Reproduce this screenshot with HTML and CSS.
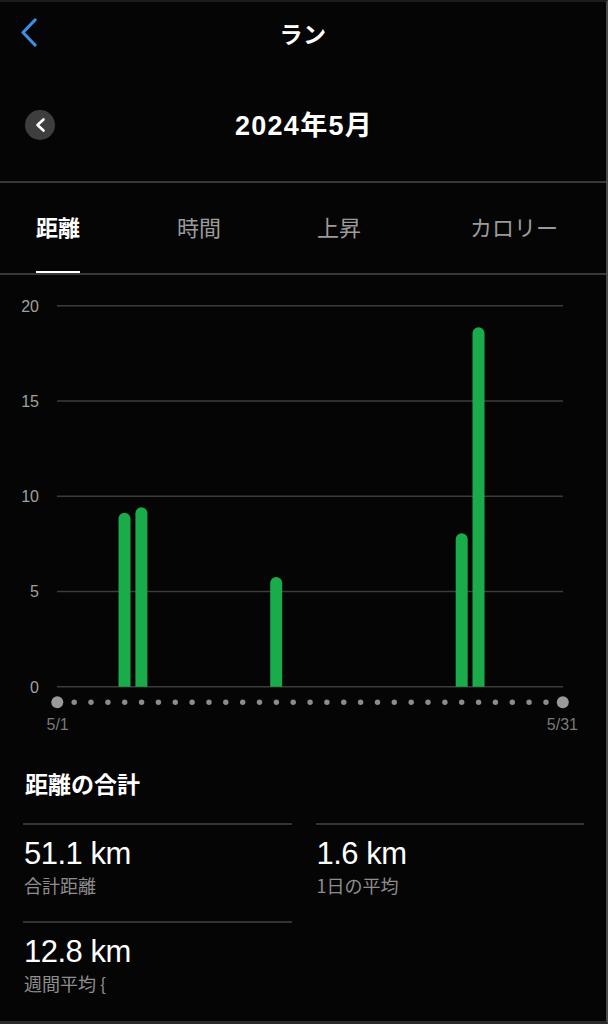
FILE: index.html
```html
<!DOCTYPE html>
<html lang="ja">
<head>
<meta charset="utf-8">
<title>ラン</title>
<link rel="stylesheet" href="styles.css">
</head>
<body>
<div class="app">
  <header class="nav">
    <div class="nav-left">
      <svg class="back" width="20" height="30" viewBox="0 0 20 30"><polyline points="15,2 3,14.5 15,27" fill="none" stroke="#3d8ee6" stroke-width="3.2" stroke-linecap="round" stroke-linejoin="round"/></svg>
    </div>
    <div class="nav-title">ラン</div>
    <div></div>
  </header>

  <section class="month">
    <div class="month-left">
      <span class="circle-btn"><svg width="30" height="30" viewBox="0 0 30 30"><polyline points="18.5,9.5 12.5,15 18.5,20.5" fill="none" stroke="#fff" stroke-width="2.6" stroke-linecap="round" stroke-linejoin="round"/></svg></span>
    </div>
    <div class="month-title">2024年5月</div>
    <div></div>
  </section>

  <nav class="tabs">
    <div class="tab active">距離</div>
    <div class="tab second">時間</div>
    <div class="tab">上昇</div>
    <div class="tab last">カロリー</div>
  </nav>

  <section class="chart">
    <svg width="606" height="475" viewBox="0 0 606 475">
      <g class="grid" stroke="#3c3c3c" stroke-width="1.5">
        <line x1="57" y1="30.7" x2="563" y2="30.7"/>
        <line x1="57" y1="125.9" x2="563" y2="125.9"/>
        <line x1="57" y1="221.2" x2="563" y2="221.2"/>
        <line x1="57" y1="316.5" x2="563" y2="316.5"/>
        <line x1="57" y1="411.7" x2="563" y2="411.7"/>
      </g>
      <g class="ylabels" text-anchor="end">
        <text x="39" y="36.5">20</text>
        <text x="39" y="131.7">15</text>
        <text x="39" y="227">10</text>
        <text x="39" y="322.3">5</text>
        <text x="39" y="417.5">0</text>
      </g>
      <g fill="#1aab4a">
        <path d="M118.5 411.7 V243.7 A6 6 0 0 1 130.5 243.7 V411.7 Z"/>
        <path d="M135.4 411.7 V238.3 A6 6 0 0 1 147.4 238.3 V411.7 Z"/>
        <path d="M270.2 411.7 V308 A6 6 0 0 1 282.2 308 V411.7 Z"/>
        <path d="M455.7 411.7 V264.3 A6 6 0 0 1 467.7 264.3 V411.7 Z"/>
        <path d="M472.5 411.7 V58.3 A6 6 0 0 1 484.5 58.3 V411.7 Z"/>
      </g>
      <g id="dots" fill="#8c8c8c">
        <circle cx="57.3" cy="427.3" r="6" fill="#9a9a9a"/>
        <circle cx="74.2" cy="427.3" r="2.7"/>
        <circle cx="91.0" cy="427.3" r="2.7"/>
        <circle cx="107.9" cy="427.3" r="2.7"/>
        <circle cx="124.7" cy="427.3" r="2.7"/>
        <circle cx="141.6" cy="427.3" r="2.7"/>
        <circle cx="158.4" cy="427.3" r="2.7"/>
        <circle cx="175.3" cy="427.3" r="2.7"/>
        <circle cx="192.1" cy="427.3" r="2.7"/>
        <circle cx="209.0" cy="427.3" r="2.7"/>
        <circle cx="225.8" cy="427.3" r="2.7"/>
        <circle cx="242.7" cy="427.3" r="2.7"/>
        <circle cx="259.5" cy="427.3" r="2.7"/>
        <circle cx="276.4" cy="427.3" r="2.7"/>
        <circle cx="293.2" cy="427.3" r="2.7"/>
        <circle cx="310.1" cy="427.3" r="2.7"/>
        <circle cx="326.9" cy="427.3" r="2.7"/>
        <circle cx="343.8" cy="427.3" r="2.7"/>
        <circle cx="360.6" cy="427.3" r="2.7"/>
        <circle cx="377.5" cy="427.3" r="2.7"/>
        <circle cx="394.3" cy="427.3" r="2.7"/>
        <circle cx="411.2" cy="427.3" r="2.7"/>
        <circle cx="428.0" cy="427.3" r="2.7"/>
        <circle cx="444.9" cy="427.3" r="2.7"/>
        <circle cx="461.7" cy="427.3" r="2.7"/>
        <circle cx="478.6" cy="427.3" r="2.7"/>
        <circle cx="495.4" cy="427.3" r="2.7"/>
        <circle cx="512.3" cy="427.3" r="2.7"/>
        <circle cx="529.1" cy="427.3" r="2.7"/>
        <circle cx="546.0" cy="427.3" r="2.7"/>
        <circle cx="562.8" cy="427.3" r="6" fill="#9a9a9a"/>
      </g>
      <g class="xlabels">
        <text x="46.5" y="454.5">5/1</text>
        <text x="578" y="454.5" text-anchor="end">5/31</text>
      </g>
    </svg>
  </section>

  <section class="summary">
    <h2 class="summary-title">距離の合計</h2>
    <div class="stats">
      <div class="stat">
        <div class="value">51.1 km</div>
        <div class="label">合計距離</div>
      </div>
      <div class="stat">
        <div class="value">1.6 km</div>
        <div class="label">1日の平均</div>
      </div>
      <div class="stat">
        <div class="value">12.8 km</div>
        <div class="label">週間平均 {</div>
      </div>
    </div>
  </section>
</div>
</body>
</html>
```

FILE: styles.css
```css
html, body {
  margin: 0;
  padding: 0;
  background: #050505;
}
body {
  font-family: "Liberation Sans", "Noto Sans CJK JP", sans-serif;
  color: #fff;
}
.app {
  width: 608px;
  height: 1024px;
  box-sizing: border-box;
  background: #050505;
  border-top: 2px solid #1c1c1c;
  border-right: 2px solid #4a4a4a;
  border-bottom: 3px solid #2a2a2a;
  display: flex;
  flex-direction: column;
  overflow: hidden;
}
.nav {
  height: 62px;
  flex: none;
  display: grid;
  grid-template-columns: 1fr auto 1fr;
  align-items: center;
}
.nav-left {
  padding-left: 20px;
  display: flex;
  align-items: center;
}
.back { display: block; }
.nav-title {
  font-family: "Noto Sans CJK JP", sans-serif;
  font-weight: 700;
  font-size: 23px;
  letter-spacing: 0.5px;
}
.month {
  height: 119px;
  flex: none;
  box-sizing: border-box;
  padding-top: 4px;
  display: grid;
  grid-template-columns: 1fr auto 1fr;
  align-items: center;
  border-bottom: 2px solid #383838;
}
.month-left {
  padding-left: 25px;
  display: flex;
}
.circle-btn {
  width: 30px;
  height: 30px;
  border-radius: 50%;
  background: #3e3e3e;
  display: flex;
  align-items: center;
  justify-content: center;
}
.circle-btn svg { display: block; }
.month-title {
  font-weight: 700;
  font-size: 27px;
  letter-spacing: 1.3px;
  padding-left: 2px;
  padding-bottom: 2px;
}
.tabs {
  height: 90px;
  flex: none;
  display: flex;
  padding-left: 36px;
  padding-right: 48px;
  border-bottom: 2px solid #383838;
  font-family: "Noto Sans CJK JP", sans-serif;
}
.tab {
  position: relative;
  display: flex;
  align-items: center;
  font-size: 22px;
  color: #9b9b9b;
  margin-right: 97px;
  padding-bottom: 4px;
  box-sizing: border-box;
}
.tab.second { margin-right: 96px; }
.tab.last { margin-right: 0; margin-left: auto; }
.tab.active {
  color: #fff;
  font-weight: 700;
}
.tab.active::after {
  content: "";
  position: absolute;
  left: 0;
  right: 0;
  bottom: 0;
  height: 2px;
  background: #fff;
}
.chart { flex: none; }
.chart svg { display: block; }
.ylabels text {
  font-family: "Liberation Sans", sans-serif;
  font-size: 16px;
  fill: #a0a0a0;
}
.xlabels text {
  font-family: "Liberation Sans", sans-serif;
  font-size: 16px;
  fill: #7a7a7a;
}
.summary {
  padding: 17px 22px 0 23px;
}
.summary-title {
  margin: 0;
  font-family: "Noto Sans CJK JP", sans-serif;
  font-size: 23px;
  font-weight: 700;
  line-height: 32px;
  padding-left: 2px;
}
.stats {
  margin-top: 24px;
  display: grid;
  grid-template-columns: 1fr 1fr;
  column-gap: 24px;
}
.stat {
  border-top: 2px solid #333;
  padding: 10px 0 24px 1px;
}
.value {
  font-size: 31px;
  line-height: 38px;
  letter-spacing: -0.5px;
}
.label {
  font-family: "Noto Sans CJK JP", sans-serif;
  font-size: 18px;
  line-height: 24px;
  color: #8e8e8e;
}
```
